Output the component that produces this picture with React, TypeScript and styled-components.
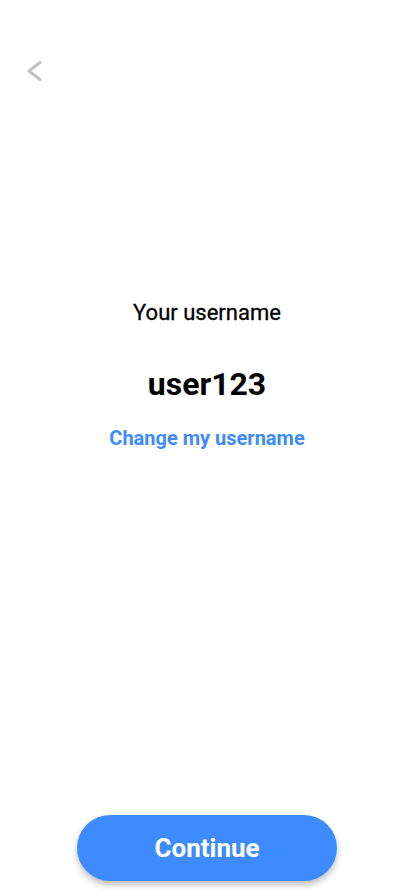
import React from 'react';
import styled, { createGlobalStyle } from 'styled-components';

function App() {
  return (
    <>
      <GlobalStyle />
      <Screen>
        <Header>
          <BackButton aria-label="Back">
            <svg width="18" height="22" viewBox="0 0 18 22" fill="none">
              <path d="M15 2.5L4 11L15 19.5" stroke="#c2c2c2" strokeWidth="3" strokeLinecap="round" strokeLinejoin="round" />
            </svg>
          </BackButton>
        </Header>
        <Content>
          <Label>Your username</Label>
          <Username>user123</Username>
          <ChangeLink href="#">Change my username</ChangeLink>
        </Content>
        <Footer>
          <ContinueButton>Continue</ContinueButton>
        </Footer>
      </Screen>
    </>
  );
}

const GlobalStyle = createGlobalStyle`
  body {
    margin: 0;
    background: #fff;
    font-family: Roboto, 'Liberation Sans', sans-serif;
    -webkit-font-smoothing: antialiased;
  }
`;

const Screen = styled.div`
  height: 896px;
  display: flex;
  flex-direction: column;
  background: #fff;
`;

const Header = styled.header`
  padding: 59px 0 0 25px;
  height: 60px;
`;

const BackButton = styled.button`
  border: none;
  background: none;
  padding: 0;
  width: 20px;
  height: 24px;
  display: flex;
  align-items: center;
  cursor: pointer;
`;

const Content = styled.main`
  flex: 1;
  display: flex;
  flex-direction: column;
  align-items: center;
  padding-top: 181px;
`;

const Label = styled.div`
  font-size: 22px;
  font-weight: 400;
  line-height: 26px;
  color: #000;
  -webkit-text-stroke: 0.3px #000;
`;

const Username = styled.div`
  margin-top: 39px;
  font-size: 32px;
  font-weight: 700;
  line-height: 38px;
  color: #000;
`;

const ChangeLink = styled.a`
  margin-top: 23px;
  font-size: 20px;
  font-weight: 700;
  line-height: 24px;
  color: #3d8bff;
  text-decoration: none;
`;

const Footer = styled.footer`
  display: flex;
  justify-content: center;
  padding-bottom: 15px;
`;

const ContinueButton = styled.button`
  width: 260px;
  height: 66px;
  border: none;
  border-radius: 33px;
  background: #3d8bff;
  color: #fff;
  font-family: Roboto, 'Liberation Sans', sans-serif;
  font-size: 26px;
  font-weight: 700;
  box-shadow: 0 4px 6px rgba(0, 0, 0, 0.25);
  cursor: pointer;
`;

export default App;
